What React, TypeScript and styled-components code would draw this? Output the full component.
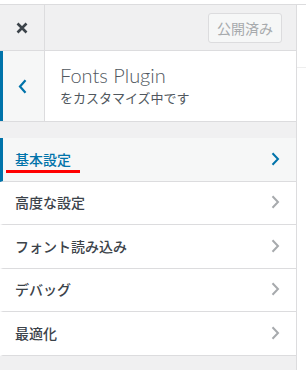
import styled, { createGlobalStyle } from "styled-components";

const GlobalStyle = createGlobalStyle`
  html, body {
    margin: 0;
    padding: 0;
    background: #ffffff;
  }
  body {
    font-family: "Noto Sans CJK JP", "Noto Sans", sans-serif;
    color: #3c434a;
  }
`;

/* --- Layout --- */

const Page = styled.div`
  width: 306px;
  height: 370px;
  padding-top: 4px;
  box-sizing: border-box;
  display: flex;
  overflow: hidden;
`;

const Sidebar = styled.aside`
  width: 297px;
  flex-shrink: 0;
  background: #f0f0f1;
  border-right: 1px solid #dcdcde;
  box-sizing: border-box;
  display: flex;
  flex-direction: column;
`;

const Preview = styled.div`
  flex: 1;
  border-top: 1px solid #dcdcde;
  background: #ffffff;
`;

const PreviewBar = styled.div`
  height: 62px;
  border-bottom: 1px solid #eeeeee;
`;

/* --- Header --- */

const Header = styled.header`
  height: 45px;
  display: flex;
  align-items: stretch;
  border-top: 1px solid #dcdcde;
  border-bottom: 1px solid #dcdcde;
  background: #f0f0f1;
`;

const CloseButton = styled.button`
  width: 45px;
  border: none;
  border-right: 1px solid #dcdcde;
  background: transparent;
  display: flex;
  align-items: center;
  justify-content: center;
  padding: 0;
  cursor: pointer;
`;

const HeaderActions = styled.div`
  flex: 1;
  display: flex;
  align-items: center;
  justify-content: flex-end;
  padding-right: 14px;
`;

const PublishButton = styled.button`
  height: 30px;
  padding: 0 8px;
  border: 1px solid #dcdcde;
  border-radius: 3px;
  background: #f6f7f7;
  color: #a7aaad;
  font-family: "Noto Sans CJK JP", sans-serif;
  font-size: 14px;
  line-height: 28px;
`;

/* --- Section info --- */

const InfoSection = styled.section`
  display: flex;
  height: 70px;
  background: #ffffff;
  border-bottom: 1px solid #dcdcde;
`;

const BackButton = styled.button`
  width: 45px;
  flex-shrink: 0;
  padding: 0 3px 0 0;
  border: none;
  border-left: 3px solid #0073aa;
  border-right: 1px solid #dcdcde;
  background: #f6f7f7;
  display: flex;
  align-items: center;
  justify-content: center;
  cursor: pointer;
`;

const TitleBlock = styled.div`
  padding: 11px 0 0 15px;
  display: flex;
  flex-direction: column;
`;

const Title = styled.div`
  font-family: Lato, "Noto Sans CJK JP", sans-serif;
  font-size: 20px;
  font-weight: 300;
  line-height: 26px;
  color: #50575e;
`;

const Subtitle = styled.div`
  font-size: 13px;
  line-height: 20px;
  color: #50575e;
`;

/* --- Menu list --- */

const Menu = styled.ul`
  list-style: none;
  margin: 16px 0 0;
  padding: 0;
`;

const MenuItem = styled.li<{ $active?: boolean }>`
  position: relative;
  box-sizing: border-box;
  height: 43.5px;
  display: flex;
  align-items: center;
  justify-content: space-between;
  padding: 0 16px 1px 12px;
  font-size: 14px;
  line-height: 20px;
  font-weight: 500;
  background: ${(p) => (p.$active ? "#f6f7f7" : "#ffffff")};
  color: ${(p) => (p.$active ? "#0073aa" : "#3c434a")};
  border-left: 3px solid ${(p) => (p.$active ? "#0073aa" : "#ffffff")};
  border-bottom: 1px solid #dcdcde;
`;

const Underline = styled.span`
  position: absolute;
  left: 3px;
  top: 32px;
  width: 74px;
  height: 3px;
  background: #ff0000;
`;

const Chevron = ({ color }: { color: string }) => (
  <svg width="9" height="14" viewBox="0 0 9 14">
    <path d="M1.5 1.2 L7 7 L1.5 12.8" fill="none" stroke={color} strokeWidth="2" />
  </svg>
);

const items = ["基本設定", "高度な設定", "フォント読み込み", "デバッグ", "最適化"];

export default function App() {
  return (
    <>
      <GlobalStyle />
      <Page>
        <Sidebar>
          <Header>
            <CloseButton aria-label="閉じる">
              <svg width="12" height="12" viewBox="0 0 12 12">
                <path d="M1.5 1.5 L10.5 10.5 M10.5 1.5 L1.5 10.5" stroke="#3c434a" strokeWidth="2.6" />
              </svg>
            </CloseButton>
            <HeaderActions>
              <PublishButton disabled>公開済み</PublishButton>
            </HeaderActions>
          </Header>

          <InfoSection>
            <BackButton aria-label="戻る">
              <svg width="9" height="15" viewBox="0 0 9 15">
                <path d="M7.5 1.2 L2 7.5 L7.5 13.8" fill="none" stroke="#0073aa" strokeWidth="2.2" />
              </svg>
            </BackButton>
            <TitleBlock>
              <Title>Fonts Plugin</Title>
              <Subtitle>をカスタマイズ中です</Subtitle>
            </TitleBlock>
          </InfoSection>

          <Menu>
            {items.map((label, i) => (
              <MenuItem key={label} $active={i === 0}>
                <span>{label}</span>
                <Chevron color={i === 0 ? "#0073aa" : "#a7aaad"} />
                {i === 0 && <Underline />}
              </MenuItem>
            ))}
          </Menu>
        </Sidebar>
        <Preview>
          <PreviewBar />
        </Preview>
      </Page>
    </>
  );
}
